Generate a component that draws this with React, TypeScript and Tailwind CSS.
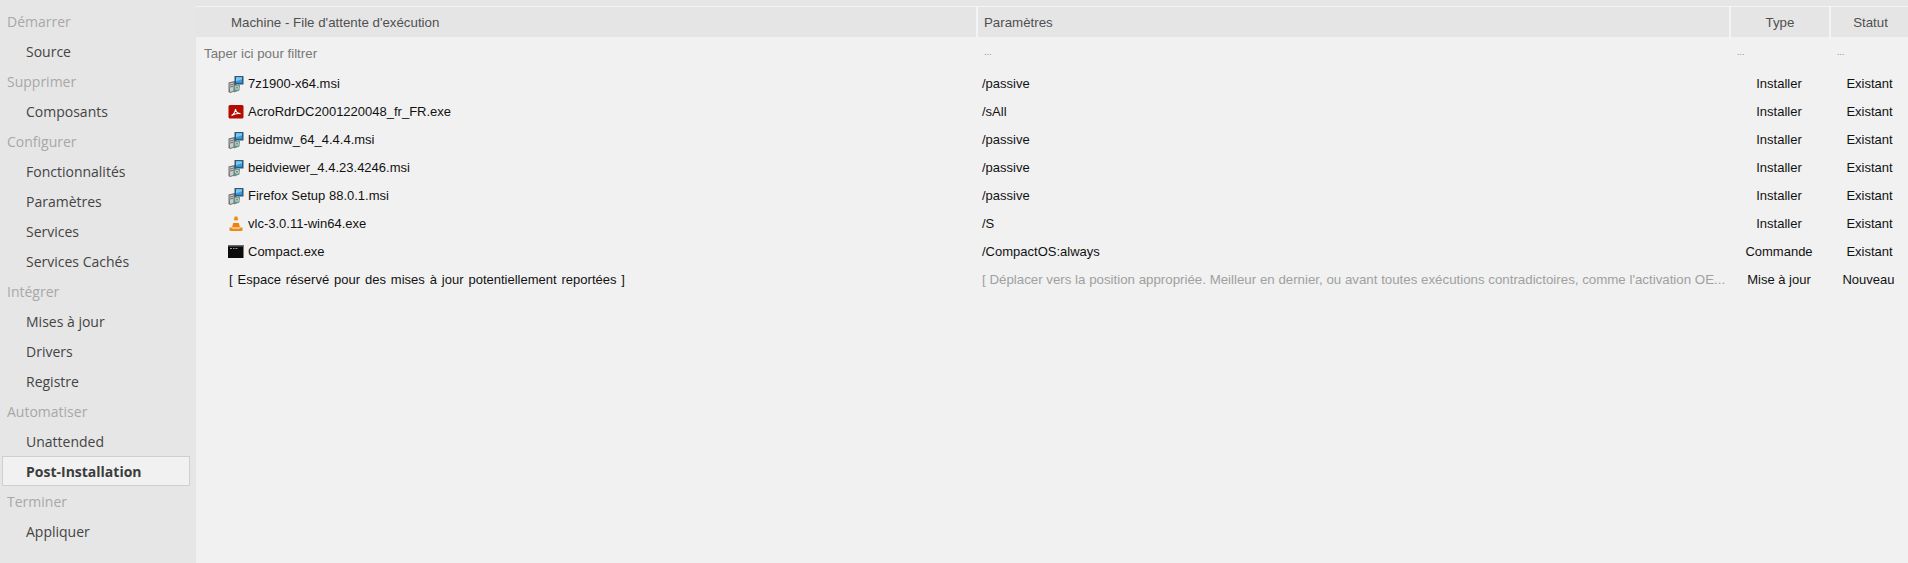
const sections = [
  { title: 'Démarrer', items: ['Source'] },
  { title: 'Supprimer', items: ['Composants'] },
  { title: 'Configurer', items: ['Fonctionnalités', 'Paramètres', 'Services', 'Services Cachés'] },
  { title: 'Intégrer', items: ['Mises à jour', 'Drivers', 'Registre'] },
  { title: 'Automatiser', items: ['Unattended', 'Post-Installation'] },
  { title: 'Terminer', items: ['Appliquer'] },
]

type Row = { icon: 'msi' | 'pdf' | 'vlc' | 'cmd'; name: string; params: string; type: string; status: string }

const rows: Row[] = [
  { icon: 'msi', name: '7z1900-x64.msi', params: '/passive', type: 'Installer', status: 'Existant' },
  { icon: 'pdf', name: 'AcroRdrDC2001220048_fr_FR.exe', params: '/sAll', type: 'Installer', status: 'Existant' },
  { icon: 'msi', name: 'beidmw_64_4.4.4.msi', params: '/passive', type: 'Installer', status: 'Existant' },
  { icon: 'msi', name: 'beidviewer_4.4.23.4246.msi', params: '/passive', type: 'Installer', status: 'Existant' },
  { icon: 'msi', name: 'Firefox Setup 88.0.1.msi', params: '/passive', type: 'Installer', status: 'Existant' },
  { icon: 'vlc', name: 'vlc-3.0.11-win64.exe', params: '/S', type: 'Installer', status: 'Existant' },
  { icon: 'cmd', name: 'Compact.exe', params: '/CompactOS:always', type: 'Commande', status: 'Existant' },
]

function FileIcon({ kind }: { kind: Row['icon'] }) {
  if (kind === 'pdf') {
    return (
      <svg width="16" height="16" viewBox="0 0 16 16" className="shrink-0">
        <rect x="0.5" y="1" width="15" height="13.5" rx="1.5" fill="#b30b00" />
        <path d="M3.500 11.500c2-1 3.600-3.500 4-6.500.4 2.800 2 4.500 5 4.600-3-.3-6.500.4-9 1.900z" fill="none" stroke="#fff" strokeWidth="1.100" />
      </svg>
    )
  }
  if (kind === 'vlc') {
    return (
      <svg width="16" height="16" viewBox="0 0 16 16" className="shrink-0">
        <path d="M6.700 0.500h2.600l1 4h-4.600z" fill="#f08a12" />
        <path d="M5.600 4.500h4.800l.5 2.500h-5.800z" fill="#f3f3f3" />
        <path d="M5.100 7h5.800l1 4.500h-7.800z" fill="#f0800f" />
        <path d="M1.500 11.500h13v2.500q0 1-1 1h-11q-1 0-1-1z" fill="#ee8a1c" />
        <path d="M4.200 11.500h7.600v1.300h-7.600z" fill="#fff" opacity="0.6" />
      </svg>
    )
  }
  if (kind === 'cmd') {
    return (
      <svg width="16" height="16" viewBox="0 0 16 16" className="shrink-0">
        <rect x="0" y="1" width="15.500" height="13" fill="#0b0b0b" />
        <rect x="0" y="1" width="15.500" height="1.500" fill="#6a6a6a" />
        <path d="M2 4.500h2M5 4.500h1.500M7.500 4.500h2" stroke="#999" strokeWidth="1" />
      </svg>
    )
  }
  return (
    <svg width="16" height="17" viewBox="0 0 16 17" className="shrink-0">
      {/* grey tower */}
      <path d="M0.500 6.500l6-1.500 2 1v9l-6.500 2-1.500-1z" fill="#6d7073" />
      <path d="M1.500 7.500l4-1v8.500l-3.500 1z" fill="#c9cbcd" />
      <path d="M2 9l3-.7M2 11l3-.7" stroke="#55585b" strokeWidth="0.800" />
      {/* monitor */}
      <rect x="6.500" y="0" width="9" height="8.500" fill="#35566f" />
      <rect x="8" y="1.300" width="6" height="5.500" fill="#2f9fe6" />
      <path d="M8 1.300h6v2l-6 2z" fill="#7cc8f2" />
      {/* disc */}
      <path d="M6 9h6l-.6 5.500-5.400 2z" fill="#6b8a88" />
      <circle cx="9" cy="11.800" r="2.200" fill="#a9d5bf" />
      <circle cx="9" cy="11.800" r="0.800" fill="#3f6b73" />
    </svg>
  )
}

function Sidebar() {
  return (
    <aside className="w-[196px] h-full shrink-0 bg-[#e6e6e6] pt-[6px] font-['Open_Sans',sans-serif] text-[14px]">
      {sections.map((section) => (
        <div key={section.title}>
          <div className="h-[30px] pl-[7px] flex items-center text-[#a8a8a8]">{section.title}</div>
          {section.items.map((item) =>
            item === 'Post-Installation' ? (
              <div key={item} className="h-[30px] ml-[2px] mr-[6px] pl-[23px] flex items-center font-bold text-[#3c3c3c] bg-[#f1f1f1] border border-[#cfcfcf]">
                {item}
              </div>
            ) : (
              <div key={item} className="h-[30px] pl-[26px] flex items-center text-[#444444]">
                {item}
              </div>
            ),
          )}
        </div>
      ))}
    </aside>
  )
}

const colClass = 'grid grid-cols-[780px_753px_100px_1fr]'

export default function App() {
  return (
    <div className="w-[1908px] h-[563px] flex overflow-hidden bg-[#f1f1f1] font-['Liberation_Sans',Arial,sans-serif] text-[13px] text-[#111111]">
      <Sidebar />
      <main className="flex-1 min-w-0">
        <div className="h-[6px] bg-[#e6e6e6]" />
        <header className={`${colClass} h-[31px] border-t border-[#f4f4f4] text-[#505050] text-[13.300px]`}>
          <div className="bg-[#e5e5e5] pl-[35px] pt-[2px] flex items-center">Machine - File d'attente d'exécution</div>
          <div className="bg-[#e5e5e5] border-l-2 border-[#f4f4f4] pl-[6px] pt-[2px] flex items-center">Paramètres</div>
          <div className="bg-[#e5e5e5] border-l-2 border-[#f4f4f4] pt-[2px] flex items-center justify-center">Type</div>
          <div className="bg-[#e5e5e5] border-l-2 border-[#f4f4f4] pt-[2px] pl-[2px] flex items-center justify-center">Statut</div>
        </header>
        <div className={`${colClass} h-[33px] items-center text-[#8a8a8a]`}>
          <div className="pl-[8px] text-[13.300px] text-[#777777]">Taper ici pour filtrer</div>
          <div className="pl-[8px] pb-[2px] text-[9px]">...</div>
          <div className="pl-[8px] pb-[2px] text-[9px]">...</div>
          <div className="pl-[8px] pb-[2px] text-[9px]">...</div>
        </div>
        {rows.map((row) => (
          <div key={row.name} className={`${colClass} h-[28px] items-center`}>
            <div className="pl-[32px] flex items-center gap-[4px]">
              <FileIcon kind={row.icon} />
              <span>{row.name}</span>
            </div>
            <div className="pl-[6px]">{row.params}</div>
            <div className="text-center">{row.type}</div>
            <div className="text-center pl-[2px]">{row.status}</div>
          </div>
        ))}
        <div className={`${colClass} h-[28px] items-center`}>
          <div className="pl-[33px] [word-spacing:1.300px]">[ Espace réservé pour des mises à jour potentiellement reportées ]</div>
          <div className="pl-[6px] whitespace-nowrap overflow-hidden text-[13.300px] text-[#a0a0a0]">
            [ Déplacer vers la position appropriée. Meilleur en dernier, ou avant toutes exécutions contradictoires, comme l'activation OE...
          </div>
          <div className="text-center">Mise à jour</div>
          <div className="text-center">Nouveau</div>
        </div>
      </main>
    </div>
  )
}
